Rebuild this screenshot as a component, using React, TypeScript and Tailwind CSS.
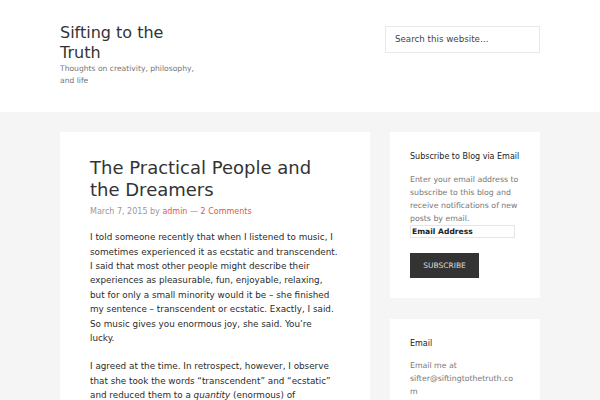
export default function App() {
  return (
    <div className="min-h-screen bg-[#f5f5f5] text-[#333]" style={{ fontFamily: '"DejaVu Sans", Verdana, sans-serif' }}>
      <header className="bg-white h-[112px]">
        <div className="w-[480px] mx-auto flex justify-between pt-[23px]">
          <div className="w-[140px]">
            <h1 className="text-[16px] leading-[20px] font-normal text-[#333]">Sifting to the Truth</h1>
            <p className="text-[7.6px] leading-[12px] text-[#777]">Thoughts on creativity, philosophy, and life</p>
          </div>
          <div className="w-[155px] mt-[3px]">
            <div className="h-[27px] border border-[#e8e8e8] bg-white flex items-center pl-[9px] text-[8.7px] text-[#444]">
              Search this website…
            </div>
          </div>
        </div>
      </header>

      <main className="w-[480px] mx-auto flex gap-5 pt-5">
        <article className="w-[310px] bg-white pt-[25px] pl-[30px] pr-[26px] pb-8 self-start">
          <h2 className="text-[18px] leading-[21.6px] font-normal text-[#333] mb-[5px]">
            The Practical People and the Dreamers
          </h2>
          <p className="text-[8px] leading-[13px] text-[#999] mb-3">
            March 7, 2015 by <span className="text-[#e5554e]">admin</span> — <span className="text-[#e5554e]">2 Comments</span>
          </p>
          <div className="text-[8.8px] leading-[14.4px] text-[#2b2b2b]">
            <p className="mb-[14px]">
              I told someone recently that when I listened to music, I sometimes experienced it as ecstatic and transcendent.<br />
              I said that most other people might describe their experiences as pleasurable, fun, enjoyable, relaxing,<br />
              but for only a small minority would it be – she finished my sentence – transcendent or ecstatic. Exactly, I said.<br />
              So music gives you enormous joy, she said. You’re<br />
              lucky.
            </p>
            <p className="mb-[14px]">
              I agreed at the time. In retrospect, however, I observe that she took the words “transcendent” and “ecstatic” and reduced them to a <em>quantity</em> (enormous) of<br />
              pleasure. But transcendence is not a matter of more pleasure; it is a different kind of experience altogether.
            </p>
          </div>
        </article>

        <aside className="w-[150px] flex flex-col gap-[21px]">
          <section className="bg-white pt-5 px-5 pb-5">
            <h3 className="text-[8px] leading-[10px] text-[#222] mb-[11px]">Subscribe to Blog via Email</h3>
            <p className="text-[7.8px] leading-[13px] text-[#777]">
              Enter your email address to subscribe to this blog and receive notifications of new posts by email.
            </p>
            <div className="w-[105px] h-[13px] border border-[#e5e5e5] flex items-center pl-[1px] text-[7.6px] font-bold text-[#222]">
              Email Address
            </div>
            <div className="mt-[15px] w-[69px] h-[25px] bg-[#333] flex items-center justify-center text-[7.5px] text-[#ddd]">
              SUBSCRIBE
            </div>
          </section>
          <section className="bg-white pt-5 px-5 pb-5">
            <h3 className="text-[8px] leading-[10px] text-[#222] mb-[10px]">Email</h3>
            <p className="text-[7.8px] leading-[13px] text-[#777] break-words">
              Email me at sifter@siftingtothetruth.com
            </p>
          </section>
        </aside>
      </main>
    </div>
  )
}
